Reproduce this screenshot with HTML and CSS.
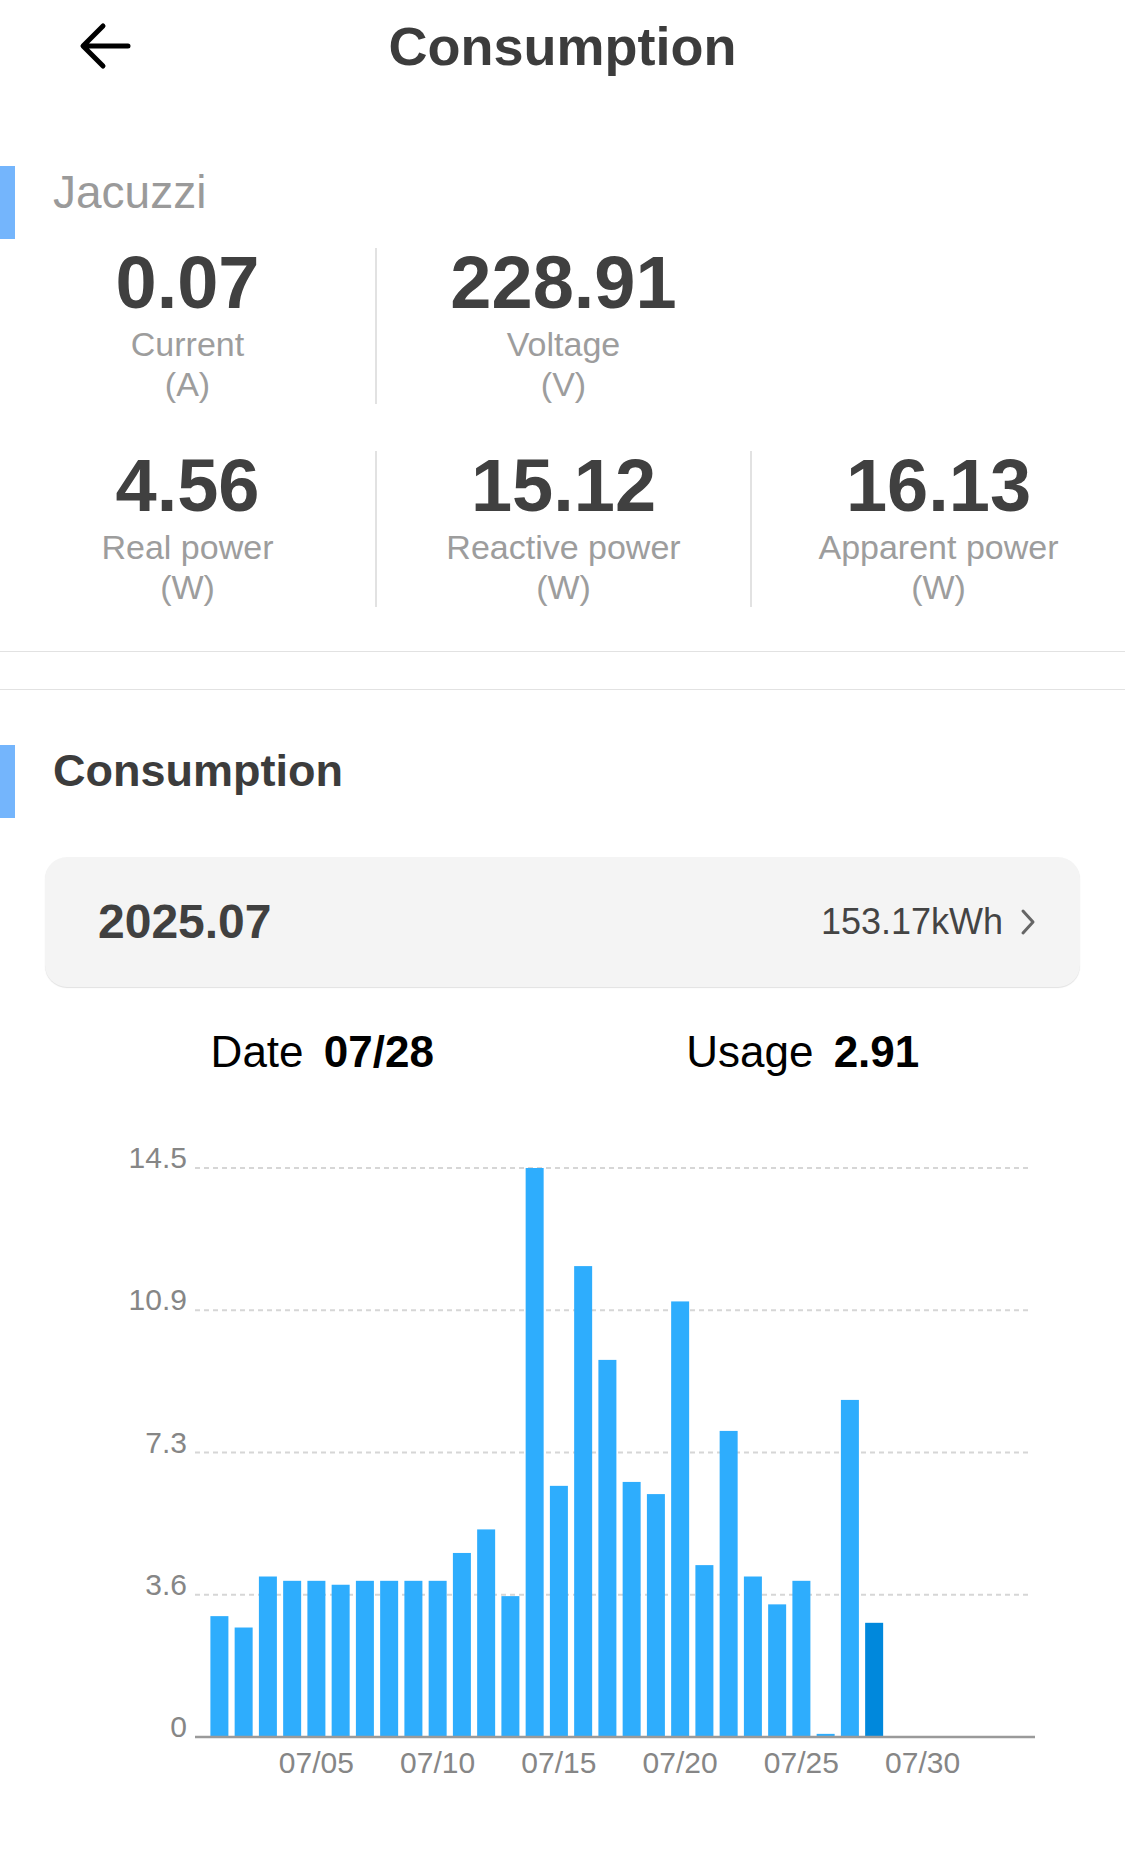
FILE: index.html
```html
<!DOCTYPE html>
<html lang="en">
<head>
    <meta charset="UTF-8">
    <meta name="viewport" content="width=device-width, initial-scale=1.0">
    <title>Consumption</title>
    <link rel="stylesheet" href="styles.css">
</head>
<body>
    <header class="top-bar">
        <button class="back-btn" aria-label="Back">
            <svg width="56" height="50" viewBox="0 0 56 50">
                <path d="M50 25 H6 M25 5 L5 25 L25 45" fill="none" stroke="#000" stroke-width="5" stroke-linecap="round" stroke-linejoin="round"/>
            </svg>
        </button>
        <h1 class="page-title">Consumption</h1>
        <div></div>
    </header>

    <section class="panel panel-live">
        <h2 class="panel-title light">Jacuzzi</h2>
        <div class="metric-row">
            <div class="metric">
                <div class="metric-value">0.07</div>
                <div class="metric-label">Current<br>(A)</div>
            </div>
            <div class="metric">
                <div class="metric-value">228.91</div>
                <div class="metric-label">Voltage<br>(V)</div>
            </div>
        </div>
        <div class="metric-row">
            <div class="metric">
                <div class="metric-value">4.56</div>
                <div class="metric-label">Real power<br>(W)</div>
            </div>
            <div class="metric">
                <div class="metric-value">15.12</div>
                <div class="metric-label">Reactive power<br>(W)</div>
            </div>
            <div class="metric">
                <div class="metric-value">16.13</div>
                <div class="metric-label">Apparent power<br>(W)</div>
            </div>
        </div>
    </section>

    <section class="panel panel-usage">
        <h2 class="panel-title">Consumption</h2>
        <div class="month-card">
            <span class="month">2025.07</span>
            <span class="month-total">153.17kWh</span>
            <svg class="chevron" width="16" height="28" viewBox="0 0 16 28">
                <path d="M3 3 L13 14 L3 25" fill="none" stroke="#666" stroke-width="3" stroke-linecap="round" stroke-linejoin="round"/>
            </svg>
        </div>
        <div class="reading">
            <div class="reading-item">Date <b id="pickDate">07/28</b></div>
            <div class="reading-item">Usage <b id="pickUsage">2.91</b></div>
        </div>
        <svg id="chart" class="chart" width="1125" height="770" viewBox="0 0 1125 770"></svg>
    </section>

    <script>
        const usage = [3.08, 2.79, 4.09, 3.98, 3.98, 3.88, 3.98, 3.98, 3.98, 3.98,
            4.69, 5.29, 3.59, 14.5, 6.40, 12.0, 9.61, 6.50, 6.19, 11.10,
            4.38, 7.80, 4.09, 3.38, 3.98, 0.08, 8.59, 2.91];
        const selectedDay = 27;

        const chart = document.getElementById('chart');
        const svgNs = 'http://www.w3.org/2000/svg';
        const plotTop = 68;
        const plotBase = 637;
        const maxVal = 14.5;
        const plotLeft = 195;
        const plotRight = 1031;
        const pitch = 24.25;
        const firstX = 219.4;
        const barW = 18;

        function addNode(name, attrs, text) {
            const node = document.createElementNS(svgNs, name);
            Object.keys(attrs).forEach(k => node.setAttribute(k, attrs[k]));
            if (text) node.textContent = text;
            chart.appendChild(node);
            return node;
        }

        // grid lines + y labels
        const ticks = ['0', '3.6', '7.3', '10.9', '14.5'];
        ticks.forEach((t, i) => {
            const y = plotBase - i * (plotBase - plotTop) / 4;
            if (i > 0) {
                addNode('line', { x1: plotLeft, x2: plotRight, y1: y, y2: y, class: 'grid' });
            }
            addNode('text', { x: 187, y: y, class: 'axis-text', 'text-anchor': 'end' }, t);
        });

        // bars
        usage.forEach((v, i) => {
            const h = Math.max(v / maxVal * (plotBase - plotTop), 2);
            const x = firstX + i * pitch - barW / 2;
            addNode('rect', { x: x, y: plotBase - h, width: barW, height: h, class: i === selectedDay ? 'bar active' : 'bar' });
        });

        addNode('line', { x1: plotLeft, x2: 1035, y1: plotBase, y2: plotBase, class: 'axis' });

        // x labels every 5 days
        [5, 10, 15, 20, 25, 30].forEach(day => {
            const x = firstX + (day - 1) * pitch;
            addNode('text', { x: x, y: 673, class: 'axis-text', 'text-anchor': 'middle' }, '07/' + String(day).padStart(2, '0'));
        });
    </script>
</body>
</html>
```

FILE: styles.css
```css
body {
    margin: 0;
    background: #fff;
    font-family: 'Liberation Sans', Arial, sans-serif;
    color: #404040;
}

.top-bar {
    display: grid;
    grid-template-columns: 1fr auto 1fr;
    align-items: center;
    height: 92px;
}

.back-btn {
    background: none;
    border: none;
    padding: 0;
    margin-left: 78px;
    width: 56px;
    height: 50px;
    cursor: pointer;
}

.back-btn svg {
    display: block;
}

.page-title {
    margin: 0;
    font-size: 54px;
    line-height: 92px;
    font-weight: bold;
    color: #3c3c3c;
}

/* Section blocks */
.panel-live {
    padding-top: 74px;
    padding-bottom: 44px;
    border-bottom: 1px solid #e2e2e2;
}

.panel-usage {
    margin-top: 37px;
    border-top: 1px solid #e2e2e2;
    padding-top: 55px;
}

.panel-title {
    margin: 0;
    height: 73px;
    line-height: 52px;
    padding-left: 38px;
    border-left: 15px solid #74b5fc;
    font-size: 45px;
    font-weight: bold;
    color: #3c3c3c;
}

.panel-title.light {
    font-size: 46px;
    font-weight: normal;
    color: #9a9a9a;
}

/* Live metrics */
.metric-row {
    display: grid;
    grid-template-columns: repeat(3, 1fr);
    margin-top: 9px;
}

.metric-row + .metric-row {
    margin-top: 47px;
}

.metric {
    text-align: center;
}

.metric + .metric {
    border-left: 2px solid #e2e2e2;
}

.metric-value {
    font-size: 74px;
    line-height: 70px;
    font-weight: bold;
    color: #404040;
}

.metric-label {
    margin-top: 6px;
    font-size: 34px;
    line-height: 40px;
    color: #9d9d9d;
}

/* Month summary */
.month-card {
    display: flex;
    align-items: center;
    height: 130px;
    margin: 39px 45px 0;
    padding: 0 44px 0 53px;
    background: #f4f4f4;
    border-radius: 22px;
    box-shadow: 0 1px 1px rgba(0, 0, 0, 0.12);
}

.month {
    flex: 1;
    font-size: 48px;
    line-height: 56px;
    font-weight: bold;
    color: #404040;
}

.month-total {
    font-size: 36px;
    line-height: 56px;
    color: #444;
}

.chevron {
    display: block;
    margin-left: 17px;
}

.reading {
    display: grid;
    grid-template-columns: 1fr 1fr;
    margin: 35px 82px 0;
}

.reading-item {
    text-align: center;
    font-size: 44px;
    line-height: 60px;
    color: #000;
}

.reading-item b {
    margin-left: 8px;
}

/* Chart */
.chart {
    display: block;
    margin-top: 18px;
}

.grid {
    stroke: #d6d6d6;
    stroke-width: 2;
    stroke-dasharray: 5 4;
}

.axis {
    stroke: #9a9a9a;
    stroke-width: 2.5;
}

.bar {
    fill: #2eadfd;
}

.bar.active {
    fill: #0088dc;
}

.axis-text {
    font-family: 'Liberation Sans', Arial, sans-serif;
    font-size: 30px;
    fill: #868686;
}
```
